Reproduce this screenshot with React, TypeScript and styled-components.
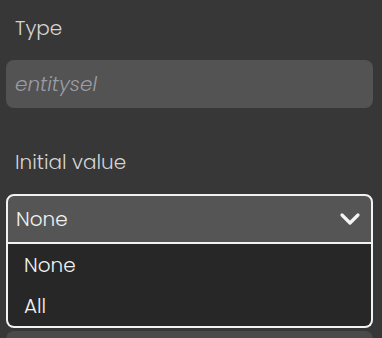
import React from "react";
import styled, { createGlobalStyle } from "styled-components";

const GlobalStyle = createGlobalStyle`
  html, body {
    margin: 0;
    padding: 0;
    background: #373737;
  }
  body {
    font-family: "Poppins", "DejaVu Sans", sans-serif;
    font-weight: 300;
  }
`;

const Page = styled.div`
  width: 382px;
  height: 338px;
  overflow: hidden;
  padding: 16px 9px 0 6px;
  box-sizing: border-box;
  display: flex;
  flex-direction: column;

  & > * {
    flex-shrink: 0;
  }
`;

const Label = styled.div<{ $gap?: number }>`
  font-size: 20px;
  line-height: 24px;
  color: #d4d4d4;
  padding-left: 9px;
  margin-top: ${(p) => p.$gap ?? 0}px;
  margin-bottom: 20px;
`;

const Input = styled.div`
  height: 48px;
  border-radius: 8px;
  background: #535353;
  display: flex;
  align-items: center;
  padding-left: 9px;
  font-size: 20px;
  font-style: italic;
  color: #9c9ca4;
`;

const SelectWrap = styled.div`
  position: relative;
`;

const SelectHeader = styled.div`
  height: 46px;
  border: 2px solid #f2f2f2;
  border-radius: 8px 8px 0 0;
  background: #555555;
  display: flex;
  align-items: center;
  justify-content: space-between;
  padding: 0 10px 0 8px;
  font-size: 20px;
  color: #f0f0f0;
`;

const Menu = styled.div`
  position: absolute;
  top: 100%;
  left: 0;
  right: 0;
  border: 2px solid #f2f2f2;
  border-top: none;
  border-radius: 0 0 8px 8px;
  background: #272727;
  z-index: 2;
`;

const Option = styled.div`
  height: 41px;
  display: flex;
  align-items: center;
  padding-left: 16px;
  font-size: 20px;
  color: #f0f0f0;
`;

const NextField = styled.div`
  margin-top: 87px;
  height: 48px;
  border-radius: 8px;
  background: #4a4a4a;
`;

const Chevron = () => (
  <svg width="22" height="16" viewBox="0 0 22 16" fill="none">
    <path
      d="M3 4 L11 12 L19 4"
      stroke="#f4f4f4"
      strokeWidth="3.2"
      strokeLinecap="round"
      strokeLinejoin="round"
    />
  </svg>
);

export default function App() {
  return (
    <Page>
      <GlobalStyle />
      <Label>Type</Label>
      <Input>entitysel</Input>
      <Label $gap={42}>Initial value</Label>
      <SelectWrap>
        <SelectHeader>
          <span>None</span>
          <Chevron />
        </SelectHeader>
        <Menu>
          <Option>None</Option>
          <Option>All</Option>
        </Menu>
      </SelectWrap>
      <NextField />
    </Page>
  );
}
